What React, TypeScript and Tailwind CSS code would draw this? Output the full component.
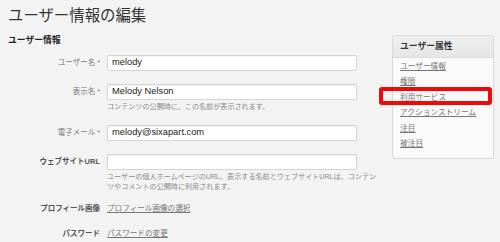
import React from "react";

const font = { fontFamily: '"Liberation Sans", "Noto Sans CJK JP", sans-serif' };

function Row({ label, bold, req, value, help }: { label: string; bold?: boolean; req?: boolean; value?: string; help?: React.ReactNode }) {
  return (
    <div>
      <div className="flex items-center">
        <div className={`w-[92px] shrink-0 text-right text-[7.5px] leading-[10px] whitespace-nowrap ${bold ? "font-bold text-[#555]" : "text-[#777]"}`}>
          {label}
          {req && <span className="ml-[2px] text-[7px]">*</span>}
        </div>
        <div className="ml-[7px] w-[250px] h-[16px] bg-white border border-[#d4d4d4] rounded-[2px] flex items-center px-[4px] text-[9.3px] text-[#222] shadow-[inset_0_1px_1px_rgba(0,0,0,0.05)]">
          {value}
        </div>
      </div>
      {help && (
        <div className="ml-[99px] mt-[2px] text-[7.1px] leading-[10px] text-[#8a8a8a] whitespace-nowrap">{help}</div>
      )}
    </div>
  );
}

export default function App() {
  const links = ["ユーザー情報", "権限", "利用サービス", "アクションストリーム", "注目", "被注目"];
  return (
    <div style={font} className="w-[500px] h-[242px] overflow-hidden bg-[#f3f3f3] flex pl-[8px] pt-[6px]">
      <div className="w-[384px] shrink-0">
        <h1 className="text-[15.4px] leading-[20px] text-[#333] whitespace-nowrap">ユーザー情報の編集</h1>
        <h2 className="mt-[9px] text-[8.8px] leading-[10px] font-bold text-[#222]">ユーザー情報</h2>
        <div className="mt-[10px]">
          <Row label="ユーザー名" req value="melody" />
        </div>
        <div className="mt-[13px]">
          <Row label="表示名" req value="Melody Nelson" help="コンテンツの公開時に、この名前が表示されます。" />
        </div>
        <div className="mt-[13px]">
          <Row label="電子メール" req value="melody@sixapart.com" />
        </div>
        <div className="mt-[13px]">
          <Row
            label="ウェブサイトURL"
            bold
            help={
              <>
                ユーザーの個人ホームページのURL。表示する名前とウェブサイトURLは、コンテン
                <br />
                ツやコメントの公開時に利用されます。
              </>
            }
          />
        </div>
        <div className="mt-[11px] flex items-center leading-[12px]">
          <div className="w-[92px] text-right text-[7.5px] font-bold text-[#555] whitespace-nowrap">プロフィール画像</div>
          <a className="ml-[7px] text-[7.6px] text-[#777] underline whitespace-nowrap">プロフィール画像の選択</a>
        </div>
        <div className="mt-[13px] flex items-center leading-[12px]">
          <div className="w-[92px] text-right text-[7.5px] font-bold text-[#555] whitespace-nowrap">パスワード</div>
          <a className="ml-[7px] text-[7.6px] text-[#777] underline whitespace-nowrap">パスワードの変更</a>
        </div>
      </div>
      <div className="relative mt-[29px] w-[102px] h-[124px] shrink-0">
        <div className="border border-[#d8d8d8] rounded-[3px] bg-[#fafafa] h-full overflow-hidden">
          <div className="h-[22px] bg-gradient-to-b from-[#efefef] to-[#e6e6e6] border-b border-[#dcdcdc] flex items-center pl-[7px] text-[8.8px] font-bold text-[#333]">
            ユーザー属性
          </div>
          <ul className="pl-[7px] pt-[1px]">
            {links.map((l) => (
              <li key={l} className="text-[7.7px] leading-[15.4px] text-[#777] underline whitespace-nowrap">
                {l}
              </li>
            ))}
          </ul>
        </div>
        <div className="absolute left-[-13px] top-[52px] w-[113px] h-[18px] border-[4px] border-[#ee0a0a] rounded-[3px]" />
      </div>
    </div>
  );
}
